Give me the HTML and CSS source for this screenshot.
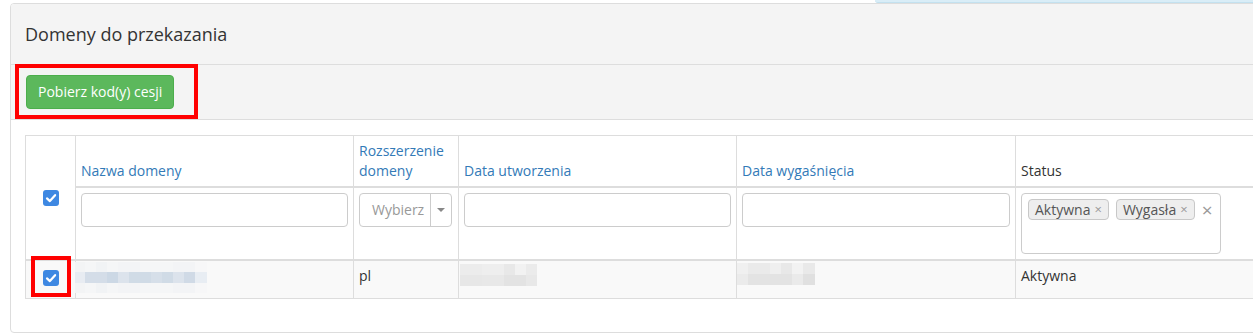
FILE: index.html
```html
<!DOCTYPE html>
<html lang="pl">
<head>
<meta charset="utf-8">
<title>Domeny do przekazania</title>
<link rel="stylesheet" href="styles.css">
</head>
<body>
<div class="topbar"><div class="alert-strip"></div></div>
<div class="panel">
  <div class="panel-heading">Domeny do przekazania</div>
  <div class="toolbar">
    <button class="btn-success" type="button">Pobierz kod(y) cesji</button>
    <div class="mark mark-btn"></div>
  </div>
  <div class="panel-body">
    <table class="grid">
      <colgroup>
        <col class="c-check">
        <col class="c-name">
        <col class="c-ext">
        <col class="c-created">
        <col class="c-expire">
        <col class="c-status">
      </colgroup>
      <thead>
        <tr class="head-row">
          <th class="check-cell" rowspan="2">
            <svg class="cb" viewBox="0 0 16 16" width="16" height="16"><rect width="16" height="16" rx="3" fill="#3e88e2"/><path d="M4 8.4 L6.9 11.1 L12.1 5.2" fill="none" stroke="#fff" stroke-width="2.2" stroke-linecap="round" stroke-linejoin="round"/></svg>
          </th>
          <th><a class="sort">Nazwa domeny</a></th>
          <th><a class="sort">Rozszerzenie domeny</a></th>
          <th><a class="sort">Data utworzenia</a></th>
          <th><a class="sort">Data wygaśnięcia</a></th>
          <th class="plain">Status</th>
        </tr>
        <tr class="filter-row">
          <td><div class="input"></div></td>
          <td>
            <div class="select">
              <span class="select-text">Wybierz</span>
              <span class="select-arrow"><span class="caret"></span></span>
            </div>
          </td>
          <td><div class="input"></div></td>
          <td><div class="input"></div></td>
          <td>
            <div class="multi">
              <span class="tag">Aktywna<span class="tag-x">×</span></span>
              <span class="tag">Wygasła<span class="tag-x">×</span></span>
              <span class="clear-x">×</span>
            </div>
          </td>
        </tr>
      </thead>
      <tbody>
        <tr class="data-row">
          <td class="check-cell data-check">
            <svg class="cb" viewBox="0 0 16 16" width="16" height="16"><rect width="16" height="16" rx="3" fill="#3e88e2"/><path d="M4 8.4 L6.9 11.1 L12.1 5.2" fill="none" stroke="#fff" stroke-width="2.2" stroke-linecap="round" stroke-linejoin="round"/></svg>
            <div class="mark mark-check"></div>
          </td>
          <td><div class="blur blur-name"><div class="band band-faint"></div><div class="band band-blue"></div><div class="band band-faint"></div></div></td>
          <td>pl</td>
          <td><div class="blur blur-date"><div class="band band-g1"></div><div class="band band-g2"></div></div></td>
          <td><div class="blur blur-date2"><div class="band band-g3"></div><div class="band band-g4"></div></div></td>
          <td>Aktywna</td>
        </tr>
      </tbody>
    </table>
  </div>
</div>
</body>
</html>
```
FILE: styles.css
```css
html, body {
  margin: 0;
  padding: 0;
  background: #fff;
  overflow: hidden;
}
body {
  font-family: "Open Sans", "Liberation Sans", sans-serif;
  font-size: 14px;
  line-height: 20px;
  color: #333;
  width: 1253px;
  height: 336px;
}
.topbar {
  height: 3px;
  display: flex;
}
.alert-strip {
  margin-left: 875px;
  flex: 1;
  height: 2px;
  background: #d9edf7;
  border-bottom: 1px solid #c3e1ef;
  border-bottom-left-radius: 3px;
}
.panel {
  margin-left: 10px;
  width: 1300px;
  border: 1px solid #ddd;
  border-radius: 4px;
  background: #fff;
}
.panel-heading {
  height: 60px;
  display: flex;
  align-items: center;
  padding: 0 14px;
  background: #f4f4f4;
  border-bottom: 1px solid #ddd;
  border-radius: 3px 3px 0 0;
  font-size: 18px;
  color: #333;
}
.toolbar {
  position: relative;
  background: #f4f4f4;
  border-bottom: 1px solid #ddd;
  padding: 10px 15px;
  height: 34px;
}
.btn-success {
  font-family: "Open Sans", "Liberation Sans", sans-serif;
  font-size: 14px;
  line-height: 20px;
  height: 34px;
  padding: 6px 11px;
  color: #fff;
  background: #5cb85c;
  border: 1px solid #4cae4c;
  border-radius: 4px;
  cursor: pointer;
}
.mark {
  position: absolute;
  border: 4px solid #ff0000;
  box-sizing: border-box;
  pointer-events: none;
}
.mark-btn {
  left: 4px;
  top: -1px;
  width: 183px;
  height: 55px;
}
.panel-body {
  padding: 15px 14px 33px;
}
.grid {
  border-collapse: collapse;
  table-layout: fixed;
  width: 1270px;
  border: 1px solid #ddd;
}
.c-check { width: 50px; }
.c-name { width: 278px; }
.c-ext { width: 105px; }
.c-created { width: 278px; }
.c-expire { width: 279px; }
.c-status { width: 280px; }
.grid th, .grid td {
  border: 1px solid #ddd;
  padding: 5px;
  text-align: left;
  vertical-align: top;
}
.head-row th {
  vertical-align: bottom;
  font-weight: normal;
  border-bottom-width: 2px;
  border-top: 0;
}
.head-row th.check-cell {
  vertical-align: middle;
  text-align: center;
  border-bottom-width: 2px;
}
.sort {
  color: #337ab7;
  text-decoration: none;
}
.plain {
  color: #333;
}
.filter-row td {
  border-bottom-width: 2px;
}
.cb {
  display: block;
  margin: 0 auto;
}
.input {
  height: 32px;
  border: 1px solid #ccc;
  border-radius: 4px;
  background: #fff;
}
.select {
  width: 91px;
  height: 32px;
  border: 1px solid #ccc;
  border-radius: 4px;
  display: flex;
  align-items: stretch;
}
.select-text {
  flex: 1;
  padding-left: 12px;
  line-height: 32px;
  color: #999;
}
.select-arrow {
  width: 20px;
  border-left: 1px solid #ccc;
  display: flex;
  align-items: center;
  justify-content: center;
}
.caret {
  width: 0;
  height: 0;
  border-left: 4px solid transparent;
  border-right: 4px solid transparent;
  border-top: 4px solid #888;
}
.multi {
  border: 1px solid #ccc;
  border-radius: 4px;
  display: flex;
  align-items: flex-start;
  gap: 7px;
  padding: 5px 0 0 6px;
  width: 192px;
  height: 54px;
}
.tag {
  display: inline-flex;
  align-items: center;
  height: 19px;
  padding: 0 6px;
  border: 1px solid #c8c8c8;
  border-radius: 4px;
  background: #eee;
  color: #555;
  font-size: 14px;
  line-height: 19px;
}
.tag-x {
  color: #999;
  font-size: 13px;
  margin-left: 4px;
}
.clear-x {
  color: #999;
  font-size: 19px;
  line-height: 22px;
}
.data-row td {
  background: #f9f9f9;
  border-top: 0;
}
.grid td.data-check {
  position: relative;
  padding: 9px 5px 10px;
}
.mark-check {
  left: 5px;
  top: -5px;
  width: 40px;
  height: 41px;
}
.blur {
  display: flex;
  flex-direction: column;
}
.band {
  flex: 1;
}
.blur-name {
  margin: -4px 0 0 -7px;
  width: 133px;
  height: 31px;
}
.band-faint {
  background: linear-gradient(90deg, #f3f4f5 0 11px, #f5f6f7 11px 22px, #f1f3f5 22px 33px, #f5f6f7 33px 44px, #f3f4f6 44px 66px, #f5f6f7 66px 99px, #f3f4f6 99px 121px, #f7f7f8 121px);
}
.band-blue {
  flex: 0 0 11px;
  background: linear-gradient(90deg, #e8ecf2 0 11px, #d4dde8 11px 33px, #ccd8e5 33px 44px, #dce3ec 44px 55px, #d0dbe6 55px 77px, #d6dfe9 77px 88px, #d0dbe6 88px 99px, #dce3ec 99px 110px, #d0dae6 110px 121px, #e8edf3 121px);
}
.blur-date {
  margin: -2px 0 0 -4px;
  width: 77px;
  height: 22px;
}
.band-g1 {
  background: linear-gradient(90deg, #ececec 0 22px, #eeeeee 22px 44px, #e8e8e8 44px 55px, #f2f2f2 55px 66px, #ebebeb 66px);
}
.band-g2 {
  background: linear-gradient(90deg, #e7e7e7 0 22px, #e8e8e8 22px 44px, #e3e3e3 44px 66px, #e8e8e8 66px);
}
.blur-date2 {
  margin: -3px 0 0 -5px;
  width: 78px;
  height: 22px;
}
.band-g3 {
  background: linear-gradient(90deg, #f0f0f0 0 11px, #eaeaea 11px 33px, #efefef 33px 44px, #e8e8e8 44px 55px, #f2f2f2 55px 66px, #e9e9e9 66px);
}
.band-g4 {
  background: linear-gradient(90deg, #ebebeb 0 11px, #e3e3e3 11px 55px, #eaeaea 55px 66px, #e0e0e0 66px);
}
```
